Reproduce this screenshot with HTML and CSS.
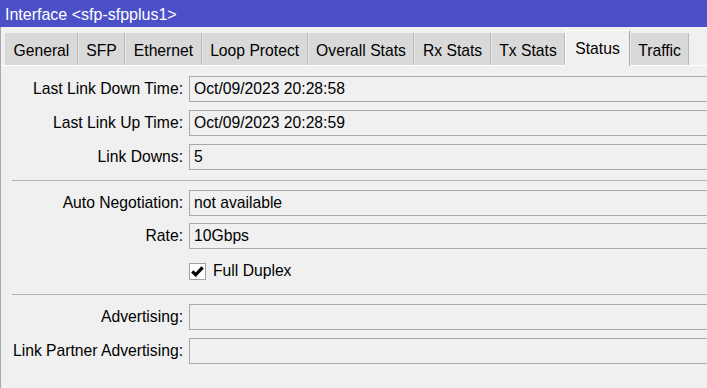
FILE: index.html
```html
<!DOCTYPE html>
<html>
<head>
<meta charset="utf-8">
<link rel="stylesheet" href="styles.css">
</head>
<body>
<div class="window">
  <div class="titlebar">Interface &lt;sfp-sfpplus1&gt;</div>
  <div class="panel">
    <div class="tabs">
      <div class="tab">General</div>
      <div class="tab">SFP</div>
      <div class="tab">Ethernet</div>
      <div class="tab">Loop Protect</div>
      <div class="tab">Overall Stats</div>
      <div class="tab">Rx Stats</div>
      <div class="tab">Tx Stats</div>
      <div class="tab active">Status</div>
      <div class="tab">Traffic</div>
    </div>
    <div class="content">
      <div class="section s1">
        <div class="label">Last Link Down Time:</div><div class="field">Oct/09/2023 20:28:58</div>
        <div class="label">Last Link Up Time:</div><div class="field">Oct/09/2023 20:28:59</div>
        <div class="label">Link Downs:</div><div class="field">5</div>
      </div>
      <div class="sep sep1"></div>
      <div class="section s2">
        <div class="label">Auto Negotiation:</div><div class="field">not available</div>
        <div class="label">Rate:</div><div class="field">10Gbps</div>
        <div class="label"></div>
        <div class="check-row">
          <span class="checkbox"><svg width="15" height="15" viewBox="0 0 15 15"><path d="M2.3 7.4 L5.7 10.8 L12.6 3.4" fill="none" stroke="#000" stroke-width="3.2" stroke-linejoin="miter"/></svg></span>
          <span class="check-label">Full Duplex</span>
        </div>
      </div>
      <div class="sep sep2"></div>
      <div class="section s3">
        <div class="label">Advertising:</div><div class="field"></div>
        <div class="label">Link Partner Advertising:</div><div class="field"></div>
      </div>
    </div>
  </div>
</div>
</body>
</html>
```

FILE: styles.css
```css
html, body {
  margin: 0;
  padding: 0;
  overflow: hidden;
  background: #f0f0f0;
}
body {
  font-family: "Liberation Sans", Arial, sans-serif;
  font-size: 15.7px;
  color: #000;
  width: 707px;
  height: 388px;
}
.titlebar {
  height: 27px;
  box-sizing: border-box;
  background: #4b50c9;
  color: #fff;
  font-size: 16px;
  padding: 3px 0 0 5px;
  line-height: 24px;
  white-space: nowrap;
}
.panel {
  border-left: 1px solid #a8a8a8;
  height: 361px;
  box-sizing: border-box;
}
.tabs {
  display: flex;
  align-items: flex-end;
  padding: 6px 0 0 4px;
  border-bottom: 1px solid #ffffff;
  height: 39px;
  box-sizing: border-box;
}
.tab {
  height: 32px;
  box-sizing: border-box;
  padding: 3px 7.5px 0 7.5px;
  line-height: 29px;
  background: #d9d9d9;
  border-left: 1px solid #e6e6e6;
  border-right: 1px solid #b9b9b9;
  white-space: nowrap;
}
.tab:first-child {
  border-left-color: #d9d9d9;
}
.tab.active {
  height: 36px;
  margin-bottom: -1px;
  padding: 3px 9px 0 9px;
  background: #f0f0f0;
  border-top: 1px solid #ffffff;
  border-left: 1px solid #ffffff;
  border-right: 1px solid #a8a8a8;
}
.content {
  margin-right: -20px;
}
.section {
  display: grid;
  grid-template-columns: 182px 1fr;
  column-gap: 6px;
  grid-auto-rows: 26px;
}
.s1 {
  margin-top: 10px;
  row-gap: 8px;
}
.s2 {
  margin-top: 9px;
  row-gap: 7px;
}
.s3 {
  margin-top: 9px;
  row-gap: 8px;
}
.label {
  text-align: right;
  line-height: 26px;
  white-space: nowrap;
}
.field {
  box-sizing: border-box;
  height: 26px;
  border: 1px solid #a9a9a9;
  padding-left: 4px;
  line-height: 24px;
  background: #f0f0f0;
  white-space: nowrap;
}
.sep {
  height: 1px;
  background: #b4b4b4;
  margin-left: 11px;
}
.sep1 {
  margin-top: 10px;
}
.sep2 {
  margin-top: 12px;
}
.check-row {
  display: flex;
  align-items: center;
  padding-top: 4px;
  height: 26px;
  box-sizing: border-box;
}
.checkbox {
  width: 17px;
  height: 17px;
  box-sizing: border-box;
  border: 1px solid #a0a0a0;
  background: #fff;
  display: flex;
  align-items: center;
  justify-content: center;
}
.check-label {
  margin-left: 7px;
  line-height: 20px;
}
```
